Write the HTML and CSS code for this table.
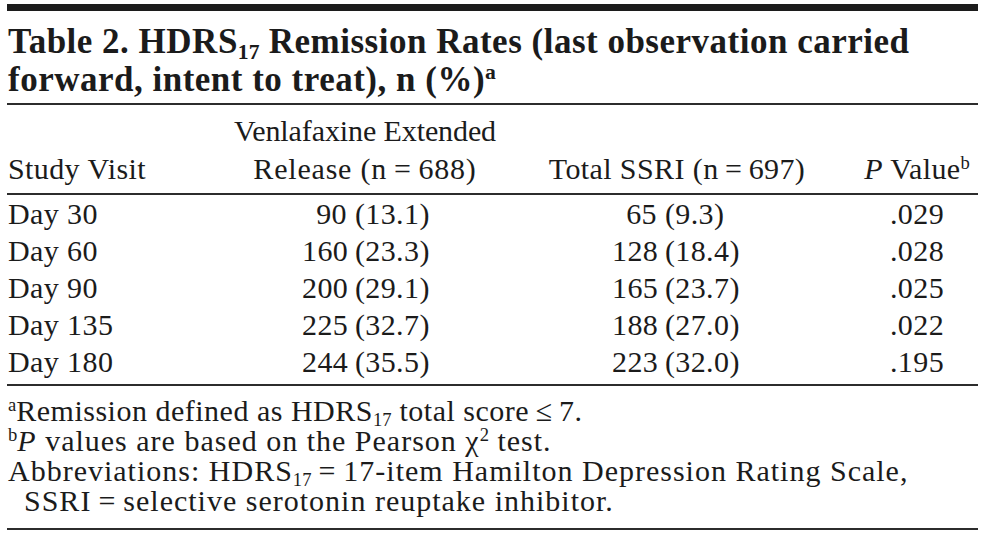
FILE: index.html
```html
<!DOCTYPE html>
<html lang="en">
<head>
<meta charset="utf-8">
<title>Table 2. HDRS17 Remission Rates</title>
<link rel="stylesheet" href="styles.css">
</head>
<body>
<div class="page">
  <div class="topbar"></div>
  <h1 class="title">Table 2. HDRS<span class="sub">17</span> Remission Rates (last observation carried<br>forward, intent to treat), n (%)<span class="sup">a</span></h1>
  <table class="data">
    <colgroup>
      <col class="w1"><col class="w2"><col class="w3"><col class="w4">
    </colgroup>
    <thead>
      <tr>
        <th class="h1">Study Visit</th>
        <th class="h2"><span class="tight">Venlafaxine Extended</span><br>Release (n&#8201;=&#8201;688)</th>
        <th class="h3">Total SSRI (n&#8201;=&#8201;697)</th>
        <th class="h4"><i>P</i> Value<span class="sup">b</span></th>
      </tr>
    </thead>
    <tbody>
      <tr><td class="visit">Day 30</td><td class="v2"><span class="n">90</span> <span class="p">(13.1)</span></td><td class="v3"><span class="n">65</span> <span class="p">(9.3)</span></td><td class="pv">.029</td></tr>
      <tr><td class="visit">Day 60</td><td class="v2"><span class="n">160</span> <span class="p">(23.3)</span></td><td class="v3"><span class="n">128</span> <span class="p">(18.4)</span></td><td class="pv">.028</td></tr>
      <tr><td class="visit">Day 90</td><td class="v2"><span class="n">200</span> <span class="p">(29.1)</span></td><td class="v3"><span class="n">165</span> <span class="p">(23.7)</span></td><td class="pv">.025</td></tr>
      <tr><td class="visit">Day 135</td><td class="v2"><span class="n">225</span> <span class="p">(32.7)</span></td><td class="v3"><span class="n">188</span> <span class="p">(27.0)</span></td><td class="pv">.022</td></tr>
      <tr class="last"><td class="visit">Day 180</td><td class="v2"><span class="n">244</span> <span class="p">(35.5)</span></td><td class="v3"><span class="n">223</span> <span class="p">(32.0)</span></td><td class="pv">.195</td></tr>
    </tbody>
  </table>
  <div class="notes">
    <p class="note first"><span class="sup">a</span>Remission defined as HDRS<span class="sub">17</span> total score&#8201;&le;&#8201;7.</p>
    <p class="note"><span class="sup">b</span><i>P</i> values are based on the Pearson &chi;<span class="sup">2</span> test.</p>
    <p class="note hang">Abbreviations: HDRS<span class="sub">17</span>&#8201;=&#8201;17-item Hamilton Depression Rating Scale,<br>SSRI&#8201;=&#8201;selective serotonin reuptake inhibitor.</p>
  </div>
</div>
</body>
</html>
```
FILE: styles.css
```css
html, body {
  margin: 0;
  padding: 0;
  background: #ffffff;
}

body {
  font-family: "Liberation Serif", "Times New Roman", serif;
  color: #1b1b1b;
}

.page {
  width: 971px;
  padding: 4px 0 0 7px;
}

.topbar {
  height: 7px;
  background: #1c1c1c;
}

.title {
  margin: 0;
  padding: 12px 0 4px 1px;
  font-size: 35px;
  line-height: 38px;
  font-weight: bold;
  letter-spacing: 0.5px;
  border-bottom: 2px solid #2c2c2c;
}

.sub {
  font-size: 0.62em;
  vertical-align: -0.28em;
  line-height: 0;
  letter-spacing: 0;
}

.sup {
  font-size: 0.62em;
  vertical-align: 0.55em;
  line-height: 0;
  letter-spacing: 0;
}

.data {
  width: 971px;
  border-collapse: collapse;
  table-layout: fixed;
  font-size: 30px;
  letter-spacing: 0.4px;
}

.w1 { width: 225px; }
.w2 { width: 266px; }
.w3 { width: 358px; }
.w4 { width: 122px; }

.data thead th {
  font-weight: normal;
  line-height: 38px;
  vertical-align: bottom;
  padding: 7px 0 5px 0;
  border-bottom: 2px solid #2c2c2c;
  white-space: nowrap;
}

.h1 { text-align: left; padding-left: 1px !important; }
.h2, .h3, .h4 { text-align: center; }
.h2 { letter-spacing: 0.8px; }

.tight { letter-spacing: -0.1px; }

.data tbody td {
  line-height: 37px;
  padding: 0;
}

.data tbody tr.last td {
  padding-bottom: 4px;
  border-bottom: 2px solid #2c2c2c;
}

.visit {
  text-align: left;
  padding-left: 1px !important;
}

.v2 { text-align: left; padding-left: 70px !important; }
.v3 { text-align: left; padding-left: 114px !important; }

.n {
  display: inline-block;
  width: 1.5em;
  text-align: right;
}

.pv { text-align: center; }

.notes {
  padding: 10px 0 12px 1px;
  border-bottom: 2px solid #2c2c2c;
  font-size: 30px;
  line-height: 30px;
  letter-spacing: 1px;
}

.note {
  margin: 0;
}

.note.first {
  letter-spacing: 0.5px;
}

.hang {
  padding-left: 16px;
  text-indent: -16px;
}
```
